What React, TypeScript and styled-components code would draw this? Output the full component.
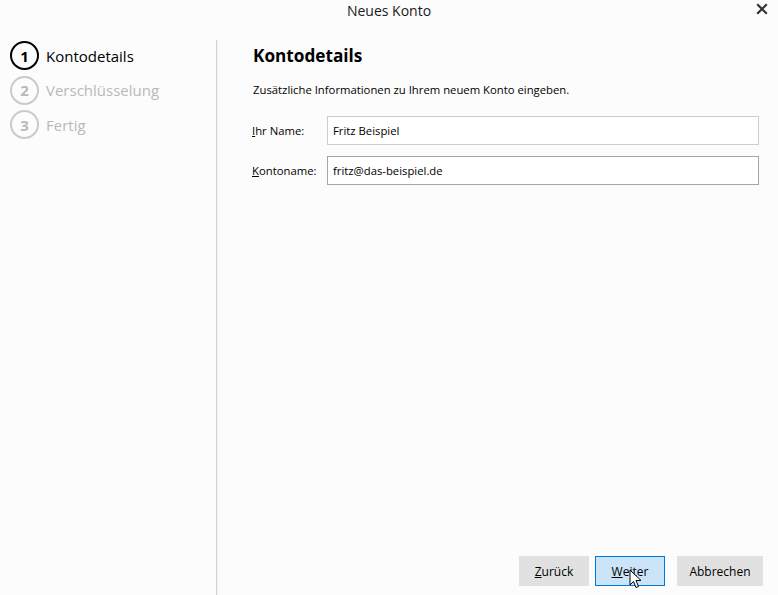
import React from 'react'
import styled, { createGlobalStyle } from 'styled-components'

const GlobalStyle = createGlobalStyle`
  html, body {
    margin: 0;
    padding: 0;
    background: #fcfcfc;
  }
  body {
    font-family: 'Open Sans', 'Noto Sans', sans-serif;
    color: #000;
  }
`

const Window = styled.div`
  width: 778px;
  height: 595px;
  display: flex;
  flex-direction: column;
  background: #fcfcfc;
  position: relative;
  overflow: hidden;
`

const TitleBar = styled.div`
  height: 20px;
  display: flex;
  align-items: center;
  justify-content: center;
  position: relative;
  font-size: 14px;
  color: #1a1a1a;
  padding-bottom: 1px;
`

const CloseButton = styled.div`
  position: absolute;
  right: 10px;
  top: 3px;
  width: 12px;
  height: 12px;
  display: flex;
`

const Body = styled.div`
  flex: 1;
  display: flex;
`

const Sidebar = styled.div`
  width: 216px;
  padding-top: 20px;
  display: flex;
  flex-direction: column;
  gap: 5.5px;
  box-sizing: border-box;
`

const Divider = styled.div`
  width: 1px;
  margin-top: 19px;
  background: #d4d4d4;
  box-shadow: 1px 0 0 #f0f0f0;
`

const Step = styled.div<{ active?: boolean }>`
  display: flex;
  align-items: center;
  height: 29px;
  padding-left: 10px;
  color: ${(p) => (p.active ? '#000' : '#b9b9b9')};
  font-size: 15px;
`

const StepCircle = styled.div<{ active?: boolean }>`
  width: 25px;
  height: 25px;
  border-radius: 50%;
  border: 2px solid ${(p) => (p.active ? '#000' : '#cacaca')};
  color: ${(p) => (p.active ? '#000' : '#b9b9b9')};
  display: flex;
  align-items: center;
  justify-content: center;
  font-size: 15px;
  font-weight: 700;
  margin-right: 7px;
  flex-shrink: 0;
`

const Main = styled.div`
  flex: 1;
  display: flex;
  flex-direction: column;
  padding: 22px 19px 9px 35px;
`

const Heading = styled.h2`
  margin: 0;
  font-size: 17.2px;
  font-weight: 700;
  line-height: 26px;
  padding-left: 1px;
`

const Description = styled.p`
  margin: 13px 0 0;
  font-size: 11.3px;
  line-height: 16px;
  padding-left: 1px;
`

const Form = styled.div`
  display: grid;
  grid-template-columns: 75px 1fr;
  row-gap: 11px;
  margin-top: 18px;
  align-items: center;
`

const Label = styled.label`
  font-size: 11.3px;
`

const Input = styled.div<{ strong?: boolean }>`
  height: 29px;
  box-sizing: border-box;
  border: 1px solid ${(p) => (p.strong ? '#a5a5a5' : '#cdcdcd')};
  background: #fff;
  display: flex;
  align-items: center;
  padding-left: 5px;
  font-size: 11.3px;
`

const Footer = styled.div`
  margin-top: auto;
  display: flex;
  justify-content: flex-end;
  align-items: center;
  margin-right: -4px;
`

const Button = styled.div<{ primary?: boolean; width: number; gap?: number }>`
  width: ${(p) => p.width}px;
  height: 30px;
  box-sizing: border-box;
  margin-left: ${(p) => p.gap ?? 0}px;
  background: ${(p) => (p.primary ? '#cce4f7' : '#e1e1e1')};
  border: 1px solid ${(p) => (p.primary ? '#0078d7' : '#e1e1e1')};
  display: flex;
  align-items: center;
  justify-content: center;
  font-size: 12px;
  color: #000;
  position: relative;
`

const Cursor = styled.svg`
  position: absolute;
  left: 33px;
  top: 12px;
`

export default function App() {
  return (
    <>
      <GlobalStyle />
      <Window>
        <TitleBar>
          Neues Konto
          <CloseButton>
            <svg width="12" height="12" viewBox="0 0 12 12">
              <path d="M2 2 L10 10 M10 2 L2 10" stroke="#333" strokeWidth="2.2" strokeLinecap="square" />
            </svg>
          </CloseButton>
        </TitleBar>
        <Body>
          <Sidebar>
            <Step active>
              <StepCircle active>1</StepCircle>
              Kontodetails
            </Step>
            <Step>
              <StepCircle>2</StepCircle>
              Verschlüsselung
            </Step>
            <Step>
              <StepCircle>3</StepCircle>
              Fertig
            </Step>
          </Sidebar>
          <Divider />
          <Main>
            <Heading>Kontodetails</Heading>
            <Description>Zusätzliche Informationen zu Ihrem neuem Konto eingeben.</Description>
            <Form>
              <Label>
                <u>I</u>hr Name:
              </Label>
              <Input>Fritz Beispiel</Input>
              <Label>
                <u>K</u>ontoname:
              </Label>
              <Input strong>fritz@das-beispiel.de</Input>
            </Form>
            <Footer>
              <Button width={70}>
                <u>Z</u>urück
              </Button>
              <Button primary width={70} gap={6}>
                <u>W</u>eiter
                <Cursor width="14" height="21" viewBox="0 0 14 21">
                  <path
                    d="M1 1 L1 16 L4.5 12.5 L7 18.5 L9.5 17.5 L7 11.5 L12 11.5 Z"
                    fill="#fff"
                    stroke="#000"
                    strokeWidth="1"
                    strokeLinejoin="miter"
                  />
                </Cursor>
              </Button>
              <Button width={86} gap={12}>
                Abbrechen
              </Button>
            </Footer>
          </Main>
        </Body>
      </Window>
    </>
  )
}
